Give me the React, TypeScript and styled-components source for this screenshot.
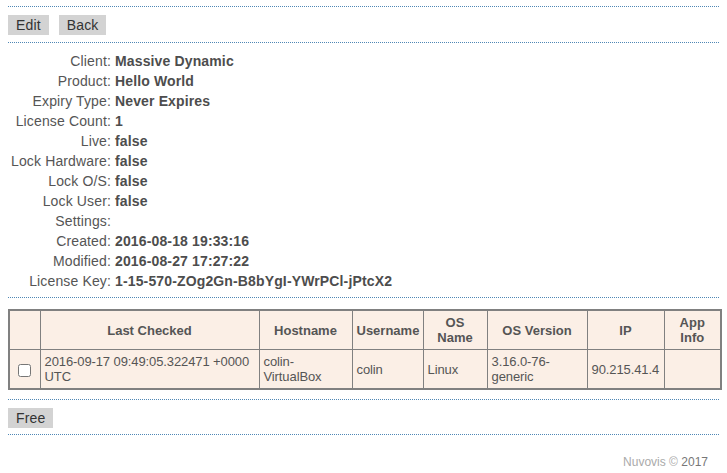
import React from 'react';
import styled, { createGlobalStyle } from 'styled-components';

const GlobalStyle = createGlobalStyle`
  body {
    margin: 0;
    padding: 6px 8px 0 8px;
    font-family: "Liberation Sans", Arial, sans-serif;
    font-size: 14px;
    color: #555;
    background: #fff;
  }
`;

const Divider = styled.div`
  border-top: 1px dotted #4f87b5;
`;

const Toolbar = styled.div`
  display: flex;
  gap: 10px;
  padding: 8px 0 7px;
`;

const Button = styled.button`
  height: 20px;
  padding: 0 8px;
  border: none;
  background: #d3d3d3;
  color: #333;
  font-family: inherit;
  font-size: 14px;
  letter-spacing: 0.15px;
  line-height: 20px;
  cursor: pointer;
`;

const Details = styled.dl`
  display: grid;
  grid-template-columns: 103px 1fr;
  column-gap: 4px;
  margin: 0;
  padding: 8px 0 6px;
  letter-spacing: 0.14px;
`;

const Label = styled.dt`
  text-align: right;
  line-height: 20px;
`;

const Value = styled.dd`
  margin: 0;
  font-weight: bold;
  line-height: 20px;
  color: #4d4d4d;
`;

const TableWrap = styled.div`
  padding: 11px 0 9px;
`;

const Table = styled.table`
  width: 712px;
  border-collapse: collapse;
  table-layout: fixed;
  background: #fbefe6;
  font-size: 13px;
  border: 2px solid #808080;
`;

const Th = styled.th`
  border: 1px solid #808080;
  height: 38px;
  padding: 0 4px;
  font-weight: bold;
  text-align: center;
  line-height: 15px;
  color: #555;
`;

const Td = styled.td<{ $center?: boolean }>`
  border: 1px solid #808080;
  height: 38px;
  padding: 0 4px;
  text-align: ${p => (p.$center ? 'center' : 'left')};
  line-height: 15px;
  letter-spacing: -0.1px;
  color: #555;
`;

const Check = styled.input`
  margin: 0;
  width: 13px;
  height: 13px;
  vertical-align: middle;
`;

const FreeBar = styled.div`
  padding: 8px 0 6px;
`;

const Footer = styled.footer`
  text-align: right;
  font-size: 12px;
  padding: 20px 11px 0 0;
  color: #aaa;
`;

const Year = styled.span`
  color: #777;
`;

const details: [string, string][] = [
  ['Client:', 'Massive Dynamic'],
  ['Product:', 'Hello World'],
  ['Expiry Type:', 'Never Expires'],
  ['License Count:', '1'],
  ['Live:', 'false'],
  ['Lock Hardware:', 'false'],
  ['Lock O/S:', 'false'],
  ['Lock User:', 'false'],
  ['Settings:', ''],
  ['Created:', '2016-08-18 19:33:16'],
  ['Modified:', '2016-08-27 17:27:22'],
  ['License Key:', '1-15-570-ZOg2Gn-B8bYgI-YWrPCl-jPtcX2'],
];

const widths = [31, 219, 93, 71, 64, 100, 77, 57];

export default function App() {
  return (
    <>
      <GlobalStyle />
      <Divider />
      <Toolbar>
        <Button>Edit</Button>
        <Button>Back</Button>
      </Toolbar>
      <Divider />
      <Details>
        {details.map(([k, v]) => (
          <React.Fragment key={k}>
            <Label>{k}</Label>
            <Value>{v}</Value>
          </React.Fragment>
        ))}
      </Details>
      <Divider />
      <TableWrap>
        <Table>
          <colgroup>
            {widths.map((w, i) => (
              <col key={i} style={{ width: w }} />
            ))}
          </colgroup>
          <thead>
            <tr>
              <Th></Th>
              <Th>Last Checked</Th>
              <Th>Hostname</Th>
              <Th>Username</Th>
              <Th>OS<br />Name</Th>
              <Th>OS Version</Th>
              <Th>IP</Th>
              <Th>App<br />Info</Th>
            </tr>
          </thead>
          <tbody>
            <tr>
              <Td $center><Check type="checkbox" /></Td>
              <Td>2016-09-17 09:49:05.322471 +0000 UTC</Td>
              <Td>colin-<br />VirtualBox</Td>
              <Td>colin</Td>
              <Td>Linux</Td>
              <Td>3.16.0-76-<br />generic</Td>
              <Td>90.215.41.4</Td>
              <Td></Td>
            </tr>
          </tbody>
        </Table>
      </TableWrap>
      <Divider />
      <FreeBar>
        <Button>Free</Button>
      </FreeBar>
      <Divider />
      <Footer>
        Nuvovis © <Year>2017</Year>
      </Footer>
    </>
  );
}
